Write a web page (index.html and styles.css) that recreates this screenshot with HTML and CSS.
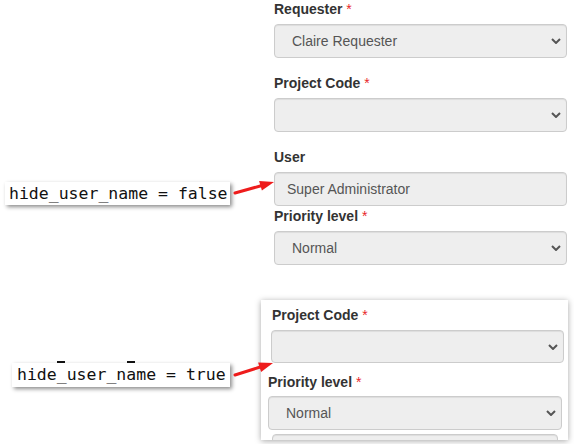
FILE: index.html
```html
<!DOCTYPE html>
<html>
<head>
<meta charset="utf-8">
<link rel="stylesheet" href="styles.css">
</head>
<body>
<div class="page">
  <div class="form-top">
    <div class="group">
      <div class="label">Requester <span class="req">*</span></div>
      <div class="select"><span>Claire Requester</span><svg class="chev" width="10" height="6" viewBox="0 0 10 6"><path d="M1 1 L5 5 L9 1" fill="none" stroke="#555" stroke-width="2"/></svg></div>
    </div>
    <div class="group">
      <div class="label">Project Code <span class="req">*</span></div>
      <div class="select"><span></span><svg class="chev" width="10" height="6" viewBox="0 0 10 6"><path d="M1 1 L5 5 L9 1" fill="none" stroke="#555" stroke-width="2"/></svg></div>
    </div>
    <div class="group group-tight">
      <div class="label">User</div>
      <div class="input">Super Administrator</div>
    </div>
    <div class="group group-last">
      <div class="label">Priority level <span class="req">*</span></div>
      <div class="select"><span>Normal</span><svg class="chev" width="10" height="6" viewBox="0 0 10 6"><path d="M1 1 L5 5 L9 1" fill="none" stroke="#555" stroke-width="2"/></svg></div>
    </div>
  </div>

  <div class="snippet">
    <div class="snip-g1">
      <div class="label snip-label1">Project Code <span class="req">*</span></div>
      <div class="select snip-sel1"><span></span><svg class="chev" width="10" height="6" viewBox="0 0 10 6"><path d="M1 1 L5 5 L9 1" fill="none" stroke="#555" stroke-width="2"/></svg></div>
    </div>
    <div class="snip-g2">
      <div class="label">Priority level <span class="req">*</span></div>
      <div class="select snip-sel2"><span>Normal</span><svg class="chev" width="10" height="6" viewBox="0 0 10 6"><path d="M1 1 L5 5 L9 1" fill="none" stroke="#555" stroke-width="2"/></svg></div>
      <div class="select snip-next"></div>
    </div>
  </div>

  <div class="note note-false">hide_user_name = false</div>
  <div class="note note-true"><span class="dash dash1"></span><span class="dash dash2"></span>hide_user_name = true</div>

  <svg class="arrows" width="574" height="444" viewBox="0 0 574 444">
    <line x1="235" y1="193" x2="262" y2="185.5" stroke="#ee1c1c" stroke-width="3" stroke-linecap="round"/>
    <polygon points="274,182 261.9,190.6 259.1,181" fill="#ee1c1c"/>
    <line x1="235" y1="375" x2="261" y2="366.8" stroke="#ee1c1c" stroke-width="3" stroke-linecap="round"/>
    <polygon points="273,363 261.1,372 258.1,362.4" fill="#ee1c1c"/>
  </svg>
</div>
</body>
</html>
```
FILE: styles.css
```css
html, body {
  margin: 0;
  padding: 0;
  background: #fff;
}
.page {
  position: relative;
  width: 574px;
  height: 444px;
  overflow: hidden;
  font-family: "Liberation Sans", Arial, sans-serif;
  font-size: 14px;
  color: #333;
}
.form-top {
  display: flex;
  flex-direction: column;
  margin-left: 274px;
  margin-top: -1px;
  width: 293px;
}
.group {
  display: flex;
  flex-direction: column;
  margin-bottom: 15px;
}
.group-tight {
  margin-bottom: 0;
}
.group-last {
  margin-bottom: 0;
}
.label {
  font-weight: bold;
  line-height: 20px;
  height: 20px;
  margin-bottom: 5px;
  color: #333;
  white-space: nowrap;
}
.req {
  color: #e8262a;
  font-weight: normal;
}
.select, .input {
  box-sizing: border-box;
  height: 34px;
  background: #eeeeee;
  border: 1px solid #cccccc;
  border-radius: 4px;
  box-shadow: inset 0 1px 1px rgba(0,0,0,0.075);
  color: #555;
  display: flex;
  align-items: center;
  line-height: 20px;
}
.select {
  padding: 0 5px 0 17px;
  justify-content: space-between;
}
.input {
  padding: 0 12px;
}
.chev {
  display: block;
  flex: none;
}
.snippet {
  box-sizing: border-box;
  margin-left: 261px;
  margin-top: 35px;
  width: 307px;
  height: 140px;
  background: #fff;
  box-shadow: 0 1px 6px rgba(0,0,0,0.35);
  padding-top: 5px;
  overflow: hidden;
  display: flex;
  flex-direction: column;
}
.snip-g1 {
  margin-left: 10px;
  width: 293px;
  display: flex;
  flex-direction: column;
}
.snip-label1 {
  padding-left: 1px;
}
.snip-sel1 {
  height: 33px;
}
.snip-g2 {
  margin-left: 7px;
  margin-top: 9px;
  width: 294px;
  display: flex;
  flex-direction: column;
}
.snip-g2 .label {
  margin-bottom: 4px;
}
.snip-sel2 {
  height: 34px;
}
.snip-next {
  margin-top: 4px;
  margin-left: 4px;
  width: 286px;
  flex: none;
  height: 20px;
}
.note {
  position: absolute;
  background: #fff;
  font-family: "DejaVu Sans Mono", "Liberation Mono", monospace;
  font-size: 16.5px;
  line-height: 24px;
  color: #111;
  white-space: nowrap;
  box-shadow: 2px 2px 4px rgba(0,0,0,0.45);
}
.note-false {
  left: 5px;
  top: 182px;
  width: 221px;
  height: 23px;
  line-height: 23px;
  padding-left: 4px;
}
.note-true {
  left: 12px;
  top: 363px;
  width: 213px;
  height: 24px;
  padding-left: 5px;
}
.dash {
  position: absolute;
  top: -2px;
  width: 8px;
  height: 2px;
  background: #111;
}
.dash1 { left: 45px; }
.dash2 { left: 115px; }
.arrows {
  position: absolute;
  left: 0;
  top: 0;
  pointer-events: none;
}
```
